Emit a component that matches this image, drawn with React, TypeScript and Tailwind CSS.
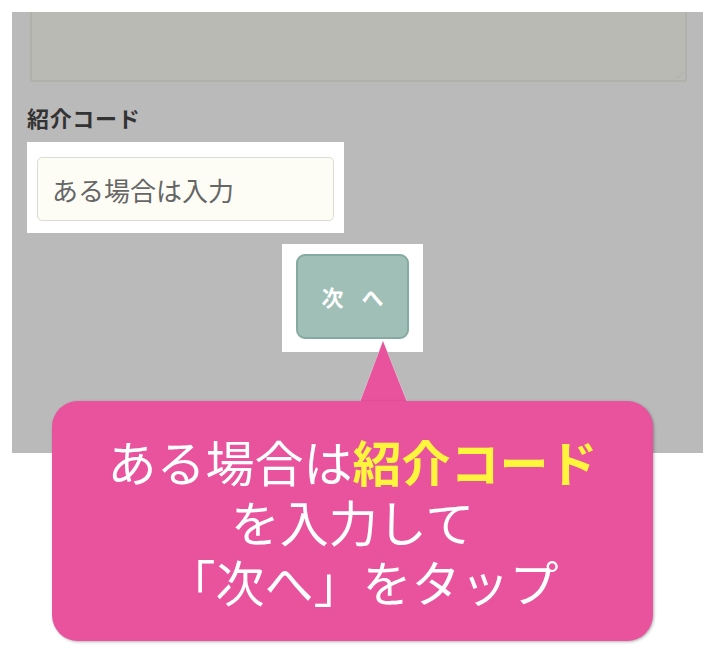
export default function App() {
  const jp = { fontFamily: '"Noto Sans CJK JP", "Noto Sans", sans-serif' };
  return (
    <div className="relative h-[654px] w-[714px] overflow-hidden bg-white" style={jp}>
      <div className="ml-[12px] mt-[12px] h-[441px] w-[691px] bg-[#bababa] pr-[16px] pl-[18px]">
        {/* textarea, top edge scrolled out of view */}
        <div className="relative h-[70px] border-x-2 border-b-2 border-[#b1b1ab] bg-[#babab4]">
          <span className="absolute right-[2px] bottom-[2px] text-[6px] leading-none text-[#8a8a86]">⋰</span>
        </div>

        <div className="-ml-[3px] mt-[20px] text-[22px] font-bold leading-[30px] tracking-[0.03em] text-[#333]">紹介コード</div>

        <div className="-ml-[3px] mt-[10px] w-[317px] bg-white px-[10px] pt-[15px] pb-[12px]">
          <div className="flex h-[64px] items-center rounded-[5px] border border-[#dcdcd6] bg-[#fdfdf6] pl-[14px] text-[26px] text-[#666]">
            ある場合は入力
          </div>
        </div>

        <div className="ml-[252px] mt-[11px] w-[141px] bg-white px-[14px] pt-[10px] pb-[13px]">
          <div className="flex h-[85px] items-center justify-center gap-[18px] rounded-[9px] border-2 border-[#86aaa1] bg-[#9fbfb7] text-[22px] font-bold text-white">
            <span>次</span>
            <span>へ</span>
          </div>
        </div>
      </div>

      {/* callout */}
      <svg className="absolute left-[358px] top-[340px]" width="52" height="64" viewBox="0 0 52 64">
        <polygon points="25,1 1,64 50,64" fill="#e9529d" stroke="#d6d6d6" strokeWidth="0.6" />
        <polygon points="25,2 2,64 49,64" fill="#e9529d" />
      </svg>
      <div className="absolute left-[52px] top-[401px] flex h-[240px] w-[601px] flex-col items-center justify-center rounded-[26px] bg-[#e9529d] text-[49px] leading-[60px] text-white shadow-[1px_1px_3px_rgba(0,0,0,0.3)]">
        <div>
          ある場合は<span className="font-bold text-[#fff53d]">紹介コード</span>
        </div>
        <div>を入力して</div>
        <div className="pl-[20px]">「次へ」をタップ</div>
      </div>
    </div>
  );
}
